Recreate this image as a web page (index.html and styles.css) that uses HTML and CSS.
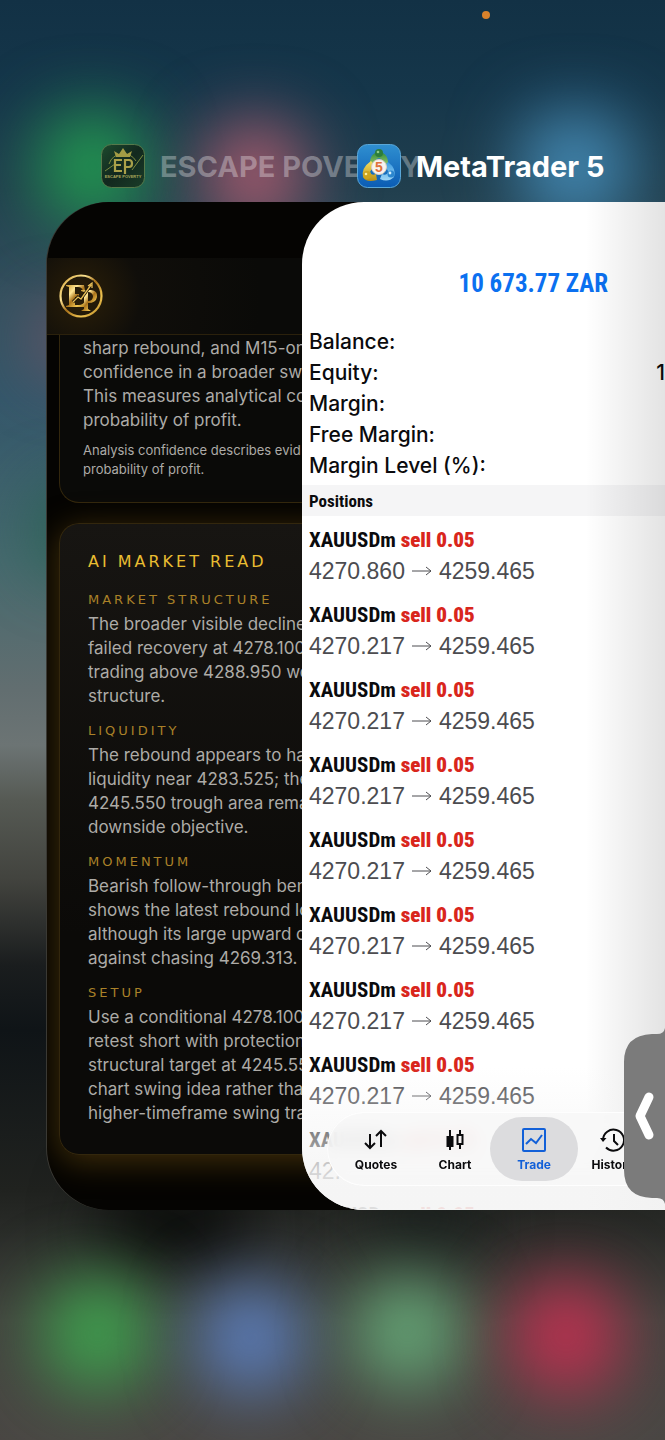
FILE: index.html
```html
<!DOCTYPE html>
<html lang="en">
<head>
<meta charset="utf-8">
<meta name="viewport" content="width=device-width, initial-scale=1">
<title>App Switcher</title>
<link rel="stylesheet" href="styles.css">
</head>
<body>
<div class="switcher">
  <div class="wallpaper" aria-hidden="true">
    <i class="glow glow-green-top"></i><i class="glow glow-pink-top"></i><i class="glow glow-blue-top"></i>
    <i class="glow glow-pink-side"></i><i class="glow glow-green-side"></i>
    <i class="glow glow-dark-left"></i><i class="glow glow-dark-mid"></i>
    <i class="glow glow-green"></i><i class="glow glow-blue"></i><i class="glow glow-sage"></i><i class="glow glow-red"></i>
  </div>
  <div class="status"><span class="recording-dot"></span></div>

  <header class="titles">
    <div class="app-title app-title-back">
      <svg class="app-icon" viewBox="0 0 44 44" aria-hidden="true">
        <defs>
          <linearGradient id="epBg" x1="0" y1="0" x2="1" y2="1"><stop offset="0" stop-color="#1d4a2e"/><stop offset=".5" stop-color="#12281e"/><stop offset="1" stop-color="#1a3c28"/></linearGradient>
        </defs>
        <rect x=".5" y=".5" width="43" height="43" rx="10" fill="url(#epBg)" stroke="#56794a"/>
        <path d="M8 20A15 15 0 0 1 35 17M4 27L14 20M31 26L42 11" fill="none" stroke="#7b8a3f" stroke-width="1"/>
        <path d="M15 13L13 7L18 10L22 4L26 10L31 7L29 13Z" fill="#a39c45"/>
        <path d="M21 16H14V27H21M14 21H20M24 30V16H28Q31 16 31 19.500Q31 23 28 23H24" fill="none" stroke="#a9a04a" stroke-width="2.2"/>
        <text x="22" y="34" class="icon-caption" text-anchor="middle">ESCAPE POVERTY</text>
      </svg>
      <span>ESCAPE POVERTY</span>
    </div>
    <div class="app-title app-title-front">
      <svg class="app-icon" viewBox="0 0 44 44" aria-hidden="true">
        <defs>
          <linearGradient id="mtBg" x1="0" y1="0" x2="0" y2="1"><stop offset="0" stop-color="#2f8fd0"/><stop offset="1" stop-color="#0b5cb4"/></linearGradient>
          <linearGradient id="mtG" x1="0" y1="0" x2="0" y2="1"><stop offset="0" stop-color="#2f8a3c"/><stop offset="1" stop-color="#9dcb6c"/></linearGradient>
          <linearGradient id="mtY" x1="0" y1="0" x2="0" y2="1"><stop offset="0" stop-color="#f5df62"/><stop offset="1" stop-color="#b98f14"/></linearGradient>
          <linearGradient id="mtB" x1="0" y1="0" x2="0" y2="1"><stop offset="0" stop-color="#3c9be0"/><stop offset="1" stop-color="#9fd6f6"/></linearGradient>
        </defs>
        <rect x=".5" y=".5" width="43" height="43" rx="10" fill="url(#mtBg)" stroke="#5aa7d8"/>
        <path d="M13 22Q12 9 22 8Q32 9 31 22L26 20Q26 15 22 14Q18 15 18 20Z" fill="url(#mtG)"/>
        <path d="M14 17Q4 24 6 33Q9 39 20 36L19 30Q14 32 13 28Q14 25 18 22Z" fill="url(#mtY)"/>
        <path d="M31 18Q40 25 37 33Q31 39 23 35L25 30Q30 32 31 28Q31 25 27 22Z" fill="url(#mtB)"/>
        <circle cx="22" cy="9" r="4" fill="#2c7d3b"/><circle cx="21" cy="8" r="1.3" fill="#8ecb85"/>
        <circle cx="10" cy="31" r="4" fill="#cda51e"/><circle cx="9" cy="30" r="1.3" fill="#fff0a0"/>
        <circle cx="34" cy="30" r="3.5" fill="#2c87cf"/><circle cx="33" cy="29" r="1.4" fill="#d4efff"/>
        <circle cx="22" cy="23" r="7.5" fill="#f7f3ee" stroke="#d8cfc4"/>
        <text x="22" y="28" class="icon-five" text-anchor="middle">5</text>
      </svg>
      <span>MetaTrader 5</span>
    </div>
  </header>

  <main class="stage">
    <section class="card card-dark" aria-label="ESCAPE POVERTY">
      <div class="dark-header">
        <svg class="ep-logo" viewBox="0 0 44 44" role="img" aria-label="EP">
          <defs><linearGradient id="gold" x1="0" y1="0" x2="1" y2="1"><stop offset="0" stop-color="#c9962a"/><stop offset=".3" stop-color="#ffe694"/><stop offset=".5" stop-color="#a8721a"/><stop offset=".75" stop-color="#f0c552"/><stop offset="1" stop-color="#a87718"/></linearGradient></defs>
          <circle cx="22" cy="22" r="20.5" fill="none" stroke="url(#gold)" stroke-width="2.2"/>
          <path d="M7 11H25L26 17H24Q23 13 19 13H16V20H20V23H16V31H20Q24 31 26 27H27L25 33H7V32L10 31V13L7 12Z" fill="url(#gold)"/>
          <path d="M22 16H32Q39 17 38 23Q37 29 29 29V35L32 37H22L25 35V18L22 17ZM29 18V27Q34 27 34 22Q33 18 29 18Z" fill="url(#gold)" fill-rule="evenodd"/>
          <path d="M14 28L19 23L22 25L32 11M29 12L33 9L33 14" fill="none" stroke="#17110a" stroke-width="3"/>
          <path d="M14 28L19 23L22 25L32 11M29 12L33 9L33 14" fill="none" stroke="#e6bd55" stroke-width="1.3"/>
        </svg>
      </div>
      <div class="panel panel-confidence">
        <p>sharp rebound, and M15-on<br>confidence in a broader swi<br>This measures analytical co<br>probability of profit.</p>
        <p class="note">Analysis confidence describes evid<br>probability of profit.</p>
      </div>
      <div class="panel panel-read">
        <h2>AI MARKET READ</h2>
        <h3>MARKET STRUCTURE</h3>
        <p>The broader visible decline<br>failed recovery at 4278.100<br>trading above 4288.950 wo<br>structure.</p>
        <h3>LIQUIDITY</h3>
        <p>The rebound appears to ha<br>liquidity near 4283.525; the<br>4245.550 trough area rema<br>downside objective.</p>
        <h3>MOMENTUM</h3>
        <p>Bearish follow-through ben<br>shows the latest rebound lo<br>although its large upward c<br>against chasing 4269.313.</p>
        <h3>SETUP</h3>
        <p>Use a conditional 4278.100<br>retest short with protection<br>structural target at 4245.55<br>chart swing idea rather than<br>higher-timeframe swing tra</p>
      </div>
    </section>

    <section class="card card-light" aria-label="MetaTrader 5">
      <h1 class="profit">10 673.77 ZAR</h1>
      <dl class="account">
        <div><dt>Balance:</dt></div>
        <div><dt>Equity:</dt><dd>1</dd></div>
        <div><dt>Margin:</dt></div>
        <div><dt>Free Margin:</dt></div>
        <div><dt>Margin Level (%):</dt></div>
      </dl>
      <h2 class="band">Positions</h2>
      <ul class="positions">
        <li><div class="deal">XAUUSDm <b>sell 0.05</b></div><div class="price">4270.860 <svg viewBox="0 0 20 12"><path d="M0 6H19M14 2L19 6L14 10"/></svg> 4259.465</div></li>
        <li><div class="deal">XAUUSDm <b>sell 0.05</b></div><div class="price">4270.217 <svg viewBox="0 0 20 12"><path d="M0 6H19M14 2L19 6L14 10"/></svg> 4259.465</div></li>
        <li><div class="deal">XAUUSDm <b>sell 0.05</b></div><div class="price">4270.217 <svg viewBox="0 0 20 12"><path d="M0 6H19M14 2L19 6L14 10"/></svg> 4259.465</div></li>
        <li><div class="deal">XAUUSDm <b>sell 0.05</b></div><div class="price">4270.217 <svg viewBox="0 0 20 12"><path d="M0 6H19M14 2L19 6L14 10"/></svg> 4259.465</div></li>
        <li><div class="deal">XAUUSDm <b>sell 0.05</b></div><div class="price">4270.217 <svg viewBox="0 0 20 12"><path d="M0 6H19M14 2L19 6L14 10"/></svg> 4259.465</div></li>
        <li><div class="deal">XAUUSDm <b>sell 0.05</b></div><div class="price">4270.217 <svg viewBox="0 0 20 12"><path d="M0 6H19M14 2L19 6L14 10"/></svg> 4259.465</div></li>
        <li><div class="deal">XAUUSDm <b>sell 0.05</b></div><div class="price">4270.217 <svg viewBox="0 0 20 12"><path d="M0 6H19M14 2L19 6L14 10"/></svg> 4259.465</div></li>
        <li><div class="deal">XAUUSDm <b>sell 0.05</b></div><div class="price">4270.217 <svg viewBox="0 0 20 12"><path d="M0 6H19M14 2L19 6L14 10"/></svg> 4259.465</div></li>
        <li><div class="deal">XAUUSDm <b>sell 0.05</b></div><div class="price">42.</div></li>
        <li><div class="deal">XAUUSDm <b>sell 0.05</b></div></li>
      </ul>
      <div class="shade" aria-hidden="true"></div>
      <nav class="tabs">
        <button type="button" class="tab">
          <svg viewBox="0 0 26 26"><path d="M7 7V21M2 16L7 21L12 16M18 20V4M13 9L18 4L23 9"/></svg>
          <span>Quotes</span>
        </button>
        <button type="button" class="tab">
          <svg viewBox="0 0 26 26"><path d="M8 3V23M18 3V8M18 17V22"/><rect x="5.5" y="10" width="5" height="9" fill="currentColor"/><rect x="15.5" y="8" width="5" height="9"/></svg>
          <span>Chart</span>
        </button>
        <button type="button" class="tab tab-active" aria-current="page">
          <svg viewBox="0 0 26 26"><rect x="2" y="2" width="22" height="22" rx="1"/><path d="M5 17L10 12L15 16L21 8"/></svg>
          <span>Trade</span>
        </button>
        <button type="button" class="tab">
          <svg viewBox="0 0 26 26"><path d="M3 13A10.5 10.5 0 1 1 6 20.500"/><path d="M14 7V14L18 18"/><path d="M0 11H6.500L3 15Z" fill="currentColor" stroke="none"/></svg>
          <span>History</span>
        </button>
      </nav>
    </section>
  </main>

  <button type="button" class="drawer" aria-label="Show window">
    <svg viewBox="0 0 41 176"><path d="M41 0Q40 6 33 6H28Q0 7 0 34V142Q0 169 28 170H33Q40 170 41 176Z" fill="#7b7b7b"/><path d="M25 69L16 88L25 107" fill="none" stroke="#fff" stroke-width="9" stroke-linecap="round" stroke-linejoin="round"/></svg>
  </button>
</div>
</body>
</html>
```
FILE: styles.css
```css
* { box-sizing: border-box; }

body {
  margin: 0;
  font-family: Inter, "Liberation Sans", sans-serif;
  background: #3d3f3c;
}

h1, h2, h3, p, dl, dd, ul { margin: 0; padding: 0; }
ul { list-style: none; }
button { border: 0; padding: 0; background: none; font: inherit; color: inherit; }

.switcher {
  position: relative;
  min-height: 100vh;
  overflow: hidden;
}

.wallpaper {
  position: absolute;
  inset: 0;
  background:
    linear-gradient(90deg, #1c565e00 0, #1c565e00 100%),
    linear-gradient(#123145 0, #15364a 90px, #213f4e 190px, #34515f 300px, #34576a 400px, #46696e 560px, #626e70 690px, #6c7474 745px, #565a54 800px, #42433e 880px, #1a1d1e 965px, #0f1417 1030px, #20221f 1190px, #292b28 1230px, #43443f 1320px, #4a4744 1440px);
}

/* Soft light of the home-screen icons behind the cards */
.glow { position: absolute; border-radius: 40px; filter: blur(34px); }
.glow-green-top { left: 40px; top: 112px; width: 105px; height: 110px; background: #229a50; }
.glow-pink-top { left: 205px; top: 122px; width: 100px; height: 105px; background: #a85a6e; }
.glow-blue-top { left: 520px; top: 112px; width: 110px; height: 110px; background: #4388b2; }
.glow-pink-side { left: 35px; top: 310px; width: 80px; height: 60px; background: #7c5568; }
.glow-green-side { left: 40px; top: 490px; width: 80px; height: 80px; background: #1f6149; }
.glow-dark-left { left: 100px; top: 1190px; width: 150px; height: 70px; background: #060706; }
.glow-dark-mid { left: 370px; top: 1190px; width: 110px; height: 60px; background: #161c1a; }
.glow-green { left: 45px; top: 1278px; width: 105px; height: 110px; background: #3ea34e; }
.glow-blue { left: 198px; top: 1284px; width: 105px; height: 108px; background: #5b7dbb; }
.glow-sage { left: 355px; top: 1278px; width: 105px; height: 108px; background: #65a877; }
.glow-red { left: 512px; top: 1280px; width: 108px; height: 112px; background: #bd3050; }

.status {
  position: relative;
  display: flex;
  justify-content: flex-end;
  height: 144px;
  padding: 11px 175px 0 0;
}
.recording-dot { width: 8px; height: 8px; border-radius: 50%; background: #d9822b; }

.titles {
  position: relative;
  display: grid;
  grid-template-columns: 256px 1fr;
  padding-left: 101px;
}
.app-title {
  grid-row: 1;
  display: flex;
  align-items: center;
  gap: 15px;
  height: 44px;
  font-size: 29px;
  font-weight: 700;
  white-space: nowrap;
}
.app-title-back { grid-column: 1 / -1; color: #ffffff50; }
.app-title-front { grid-column: 2; color: #fff; }
.app-icon { width: 44px; height: 44px; flex: none; }
.icon-caption { font: 700 4px "Liberation Sans", sans-serif; fill: #a9a65b; }
.icon-five { font: 700 14px "Liberation Sans", sans-serif; fill: #e0713a; }

.stage {
  position: relative;
  display: grid;
  grid-template-columns: 255px 1fr;
  padding: 14px 0 0 47px;
}
.card {
  grid-row: 1;
  position: relative;
  overflow: hidden;
  border-radius: 62px 0 0 62px;
}

.card-dark {
  grid-column: 1 / -1;
  display: flex;
  flex-direction: column;
  padding: 56px 0 55px;
  background: #050402;
  box-shadow: -1px 0 0 #3a3934;
  color: #adaba7;
  white-space: nowrap;
}
.dark-header {
  padding: 16px 12px;
  border-bottom: 1px solid #2b210c;
  background: radial-gradient(circle at 34px 38px, #2b1f08 0, #100e0a 60px, #0a0a08 180px);
}
.ep-logo { display: block; width: 44px; height: 44px; }
.panel {
  margin-left: 12px;
  border: 1px solid #33270d;
  font-size: 17px;
  line-height: 24px;
}
.panel-confidence {
  padding: 1px 23px 23px;
  border-top: 0;
  border-right: 0;
  border-radius: 0 0 0 20px;
  background: #0a0a08;
}
.note { margin-top: 9px; font-size: 13px; line-height: 19px; }
.panel-read {
  margin-top: 20px;
  padding: 25px 28px 29px;
  border-right: 0;
  border-radius: 20px 0 0 20px;
  background: linear-gradient(#171512, #0b0a08 65%);
  box-shadow: 0 6px 32px #6b4c0f99;
}
.panel-read h2, .panel-read h3 { font-family: "DejaVu Sans", sans-serif; font-weight: 400; }
.panel-read h2 { padding-bottom: 2px; font-size: 16px; line-height: 26px; letter-spacing: 3px; color: #e9bd31; }
.panel-read h3 { margin: 13px 0 2px; font-size: 13px; line-height: 20px; letter-spacing: 3px; color: #aa8128; }

.card-light {
  grid-column: 2;
  background: #fff;
  color: #0b0b0d;
}
.profit {
  padding: 66px 57px 0 0;
  font: 700 25px/32px "Liberation Sans Narrow", "Roboto Condensed", "Liberation Sans", sans-serif;
  text-align: right;
  color: #0b70f0;
}
.account {
  padding: 26px 0 4px 7px;
  font-size: 21px;
  font-weight: 500;
  line-height: 31px;
}
.account div { display: flex; justify-content: space-between; }
.band {
  padding: 1px 0 0 7px;
  background: #f5f5f6;
  font: 700 17px/30px "Liberation Sans Narrow", "Roboto Condensed", "Liberation Sans", sans-serif;
}
.positions { height: 693px; padding: 8px 0 0 7px; overflow: hidden; }
.positions li { height: 75px; }
.deal {
  font: 700 21px/32px "Liberation Sans Narrow", "Roboto Condensed", "Liberation Sans", sans-serif;
}
.deal b { color: #d9261c; }
.price {
  display: flex;
  align-items: center;
  gap: 7px;
  font: 400 23px/30px "Liberation Sans", sans-serif;
  color: #4c4c50;
}
.price svg { width: 20px; height: 12px; fill: none; stroke: currentColor; stroke-width: 1; }
.shade {
  position: absolute;
  inset: 0;
  background:
    linear-gradient(#f4f4f400 865px, #f4f4f466 915px, #f4f4f4e6 985px),
    linear-gradient(90deg, #0000 78%, #0000001c);
}

.tabs {
  position: absolute;
  left: 25px;
  right: 0;
  bottom: 24px;
  display: flex;
  padding: 4px;
  border: 1px solid #ffffffcc;
  border-right: 0;
  border-radius: 37px 0 0 37px;
  background: #f7f7f7cc;
  backdrop-filter: blur(9px);
}
.tab {
  flex: none;
  display: flex;
  flex-direction: column;
  align-items: center;
  gap: 4px;
  width: 88px;
  height: 64px;
  margin-right: -9px;
  padding-top: 10px;
  border-radius: 32px;
  font-size: 12px;
  font-weight: 700;
  line-height: 16px;
}
.tab svg { width: 26px; height: 26px; fill: none; stroke: currentColor; stroke-width: 2; }
.tab-active { background: #dcdcde; color: #1260d8; }

.drawer {
  position: absolute;
  top: 1028px;
  right: 0;
  width: 41px;
  height: 176px;
}
.drawer svg { display: block; width: 41px; height: 176px; }
```
